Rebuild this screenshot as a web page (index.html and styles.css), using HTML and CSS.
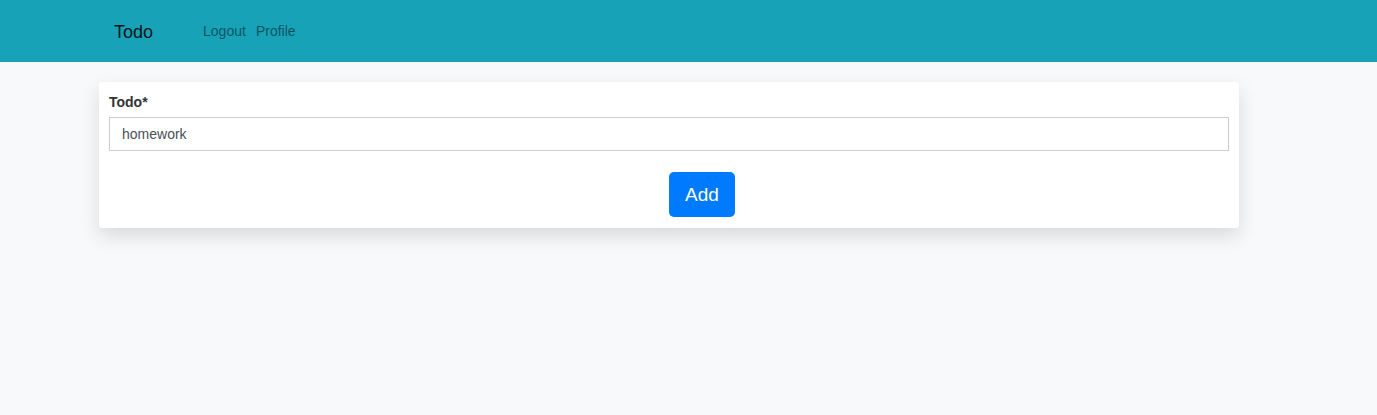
FILE: index.html
```html
<!DOCTYPE html>
<html>
<head>
<meta charset="utf-8">
<link rel="stylesheet" href="styles.css">
</head>
<body>
<nav class="navbar">
  <a class="brand">Todo</a>
  <div class="links">
    <a class="link">Logout</a>
    <a class="link">Profile</a>
  </div>
</nav>
<main class="main">
  <form class="card">
    <label class="label">Todo*</label>
    <input class="input" type="text" value="homework">
    <div class="actions">
      <button class="btn" type="button">Add</button>
    </div>
  </form>
</main>
</body>
</html>
```
FILE: styles.css
```css
* { box-sizing: border-box; }
html, body { margin: 0; padding: 0; }
body {
  background: #f8f9fa;
  font-family: "Liberation Sans", Arial, sans-serif;
  color: #212529;
  height: 415px;
}
.navbar {
  height: 62px;
  background: #17a2b8;
  display: flex;
  align-items: center;
  padding-left: 114px;
}
.brand {
  font-size: 18px;
  color: rgba(0,0,0,.9);
  margin-right: 50px;
  position: relative;
  top: 1px;
}
.links { display: flex; gap: 10px; }
.link {
  font-size: 14px;
  color: rgba(0,0,0,.5);
}
.main {
  padding: 20px 0 0 99px;
}
.card {
  width: 1140px;
  background: #fff;
  border-radius: 3px;
  box-shadow: 0 8px 20px rgba(0,0,0,.13);
  padding: 12px 10px 11px 10px;
  display: flex;
  flex-direction: column;
}
.label {
  font-size: 14px;
  font-weight: bold;
  color: #333;
  line-height: 16px;
  margin-bottom: 7px;
}
.input {
  height: 34px;
  border: 1px solid #ccc;
  border-radius: 0;
  padding: 0 12px;
  font-family: "Liberation Sans", Arial, sans-serif;
  font-size: 14px;
  color: #495057;
  outline: none;
}
.actions {
  display: flex;
  margin-top: 21px;
  padding-left: 50%;
}
.btn {
  width: 66px;
  height: 45px;
  background: #007bff;
  color: #fff;
  border: none;
  border-radius: 5px;
  font-family: "Liberation Sans", Arial, sans-serif;
  font-size: 19px;
  padding: 0;
}
```
